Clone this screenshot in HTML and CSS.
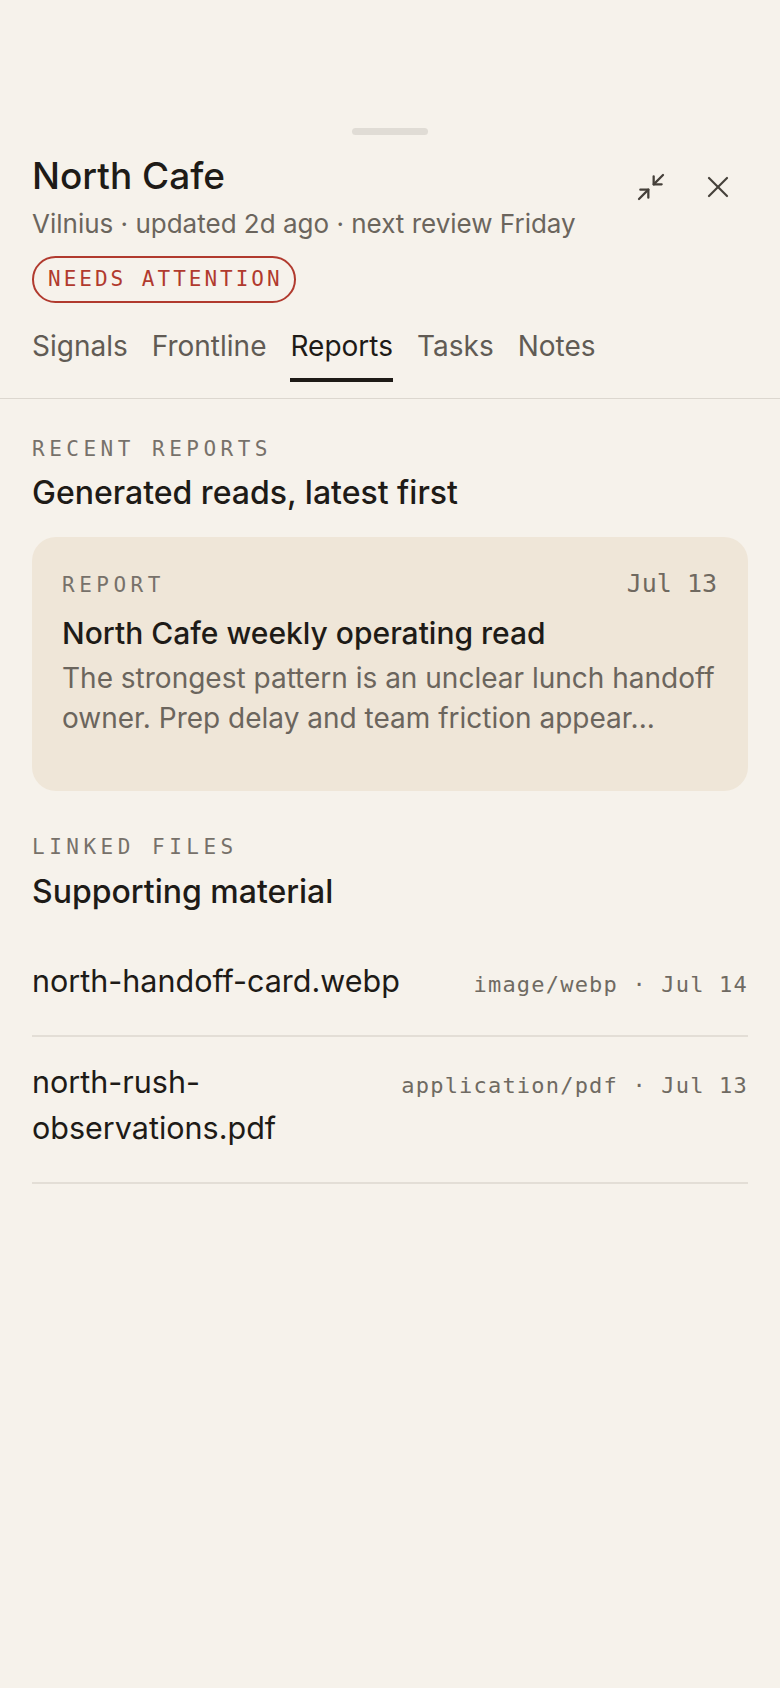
FILE: index.html
```html
<!DOCTYPE html>
<html lang="en">
<head>
    <meta charset="UTF-8">
    <meta name="viewport" content="width=device-width, initial-scale=1.0">
    <title>North Cafe</title>
    <link rel="stylesheet" href="styles.css">
</head>
<body>
    <div class="sheet">
        <div class="handle"></div>

        <!-- Header -->
        <div class="sheet-head">
            <div class="head-row">
                <div class="head-text">
                    <h1>North Cafe</h1>
                    <p class="sub">Vilnius · updated 2d ago · next review Friday</p>
                </div>
                <div class="head-actions">
                    <button class="icon-btn" aria-label="Minimize">
                        <svg width="32" height="32" viewBox="0 0 24 24" fill="none" stroke="#45403a" stroke-width="1.7" stroke-linecap="round" stroke-linejoin="round">
                            <polyline points="4 14 10 14 10 20"/>
                            <polyline points="20 10 14 10 14 4"/>
                            <line x1="14" y1="10" x2="21" y2="3"/>
                            <line x1="3" y1="21" x2="10" y2="14"/>
                        </svg>
                    </button>
                    <button class="icon-btn" aria-label="Close">
                        <svg width="24" height="24" viewBox="0 0 24 24" fill="none" stroke="#45403a" stroke-width="2.2" stroke-linecap="round">
                            <line x1="3" y1="3" x2="21" y2="21"/>
                            <line x1="21" y1="3" x2="3" y2="21"/>
                        </svg>
                    </button>
                </div>
            </div>
            <span class="badge">NEEDS ATTENTION</span>
        </div>

        <!-- Tabs -->
        <nav class="tabs">
            <a class="tab">Signals</a>
            <a class="tab">Frontline</a>
            <a class="tab active">Reports</a>
            <a class="tab">Tasks</a>
            <a class="tab">Notes</a>
        </nav>

        <!-- Recent reports -->
        <section class="block first">
            <div class="eyebrow">RECENT REPORTS</div>
            <h2>Generated reads, latest first</h2>
            <div class="report-card">
                <div class="report-top">
                    <span class="eyebrow small">REPORT</span>
                    <span class="report-date">Jul 13</span>
                </div>
                <h3>North Cafe weekly operating read</h3>
                <p class="report-text">The strongest pattern is an unclear lunch handoff owner. Prep delay and team friction appear...</p>
            </div>
        </section>

        <!-- Linked files -->
        <section class="block">
            <div class="eyebrow">LINKED FILES</div>
            <h2>Supporting material</h2>
            <ul class="files">
                <li class="file-row">
                    <span class="file-name">north-handoff-card.webp</span>
                    <span class="file-meta">image/webp · Jul 14</span>
                </li>
                <li class="file-row">
                    <span class="file-name">north-rush-observations.pdf</span>
                    <span class="file-meta">application/pdf · Jul 13</span>
                </li>
            </ul>
        </section>
    </div>
</body>
</html>
```

FILE: styles.css
```css
body {
    margin: 0;
    padding: 0;
    background-color: #f6f2eb;
    font-family: Inter, "Noto Sans", sans-serif;
    color: #1e1b17;
}
.sheet {
    min-height: 1600px;
}
.handle {
    width: 76px;
    height: 7px;
    margin: 128px auto 0;
    border-radius: 4px;
    background: #e0dcd5;
}
.sheet-head {
    padding: 19px 32px 0;
}
.head-row {
    display: flex;
    justify-content: space-between;
    align-items: flex-start;
}
h1 {
    margin: 0;
    font-size: 37px;
    line-height: 44px;
    font-weight: 500;
}
.sub {
    margin: 8px 0 0;
    font-size: 26px;
    line-height: 36px;
    color: #6b655d;
}
.head-actions {
    display: flex;
    gap: 23px;
    margin: 11px 8px 0 0;
}
.icon-btn {
    width: 44px;
    height: 44px;
    padding: 0;
    border: none;
    background: none;
    display: flex;
    align-items: center;
    justify-content: center;
    cursor: pointer;
}
.badge {
    display: inline-block;
    margin-top: 14px;
    padding: 8px 11px 8px 14px;
    border: 2px solid #b13a2e;
    border-radius: 24px;
    color: #b13a2e;
    font-family: "DejaVu Sans Mono", monospace;
    font-size: 21px;
    line-height: 27px;
    letter-spacing: 3px;
}
.tabs {
    display: flex;
    gap: 24px;
    margin-top: 24px;
    padding: 0 32px 16px;
    border-bottom: 1px solid #dcd7cf;
}
.tab {
    font-size: 28px;
    line-height: 38px;
    color: #615b54;
    padding-bottom: 13px;
    border-bottom: 4px solid transparent;
}
.tab.active {
    color: #1e1b17;
    border-bottom-color: #1e1b17;
}
.block {
    padding: 42px 32px 0;
}
.block.first {
    padding-top: 36px;
}
.block.first h2 {
    margin-top: 9px;
}
.eyebrow {
    font-family: "DejaVu Sans Mono", monospace;
    font-size: 21px;
    line-height: 29px;
    letter-spacing: 4.5px;
    color: #77716a;
}
h2 {
    margin: 10px 0 0;
    font-size: 32px;
    line-height: 40px;
    font-weight: 500;
}
.report-card {
    margin-top: 24px;
    padding: 32px 31px 53px 30px;
    border-radius: 24px;
    background: #efe6d8;
}
.report-top {
    display: flex;
    justify-content: space-between;
    align-items: baseline;
}
.eyebrow.small {
    line-height: 30px;
}
.report-date {
    font-family: "DejaVu Sans Mono", monospace;
    font-size: 25px;
    line-height: 30px;
    color: #6f6960;
}
h3 {
    margin: 14px 0 0;
    font-size: 30px;
    line-height: 38px;
    font-weight: 500;
}
.report-text {
    margin: 6px 0 0;
    font-size: 28px;
    line-height: 40px;
    color: #6b655d;
}
.files {
    list-style: none;
    margin: 24px 0 0;
    padding: 0;
}
.file-row {
    display: flex;
    justify-content: space-between;
    align-items: baseline;
    gap: 24px;
    padding: 22px 0 31px;
    border-bottom: 2px solid #e3ded6;
}
.file-name {
    flex: 1;
    min-width: 0;
    font-size: 30.5px;
    line-height: 46px;
}
.file-meta {
    font-family: "DejaVu Sans Mono", monospace;
    font-size: 22px;
    letter-spacing: 1.2px;
    color: #6f6a62;
    white-space: nowrap;
}
```
